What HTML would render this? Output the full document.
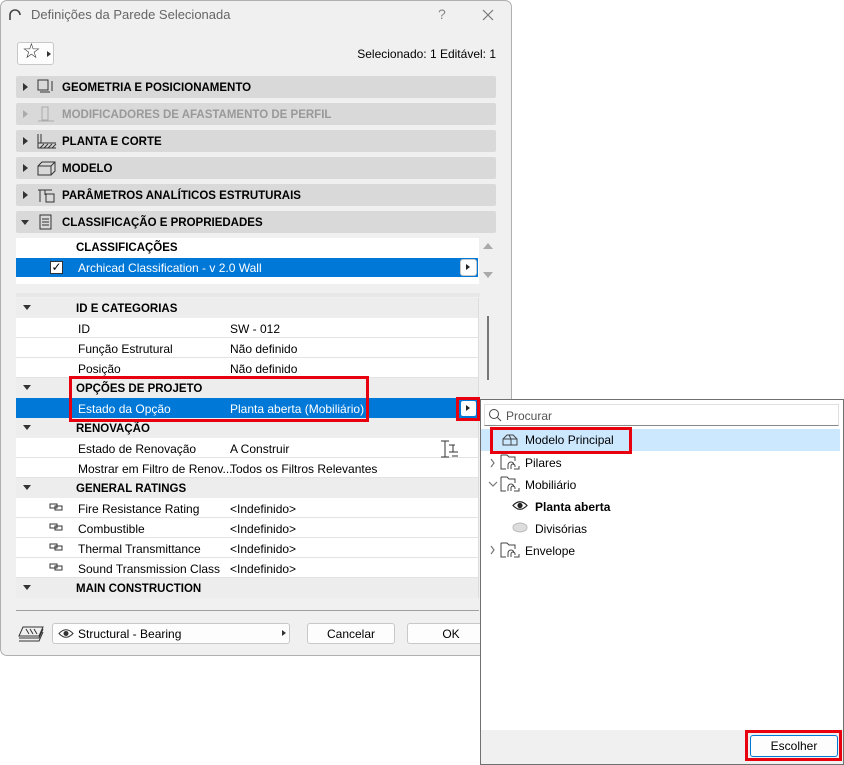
<!DOCTYPE html>
<html><head><meta charset="utf-8"><style>
*{box-sizing:border-box;margin:0;padding:0}
body{width:844px;height:765px;background:#fff;font-family:"Segoe UI","Liberation Sans",sans-serif;font-size:12px;color:#000;position:relative;overflow:hidden}
.a{position:absolute}
.dlg{left:0;top:0;width:512px;height:656px;background:#f0f0f0;border:1px solid #b0b0b0;border-radius:7px}
.sec{left:16px;width:480px;height:22px;background:#d9d9d9;border-radius:2px;font-weight:bold;font-size:11.5px;line-height:24px}
.sec .t{position:absolute;left:46px}
.tri{position:absolute;left:7px;top:7px;width:0;height:0;border-top:4px solid transparent;border-bottom:4px solid transparent;border-left:5px solid #333}
.trid{position:absolute;left:5px;top:9px;width:0;height:0;border-left:4px solid transparent;border-right:4px solid transparent;border-top:5px solid #333}
.ic{position:absolute;left:21px;top:3px}
.row{left:16px;width:462px;height:20px;background:#fff;border-bottom:1px solid #e3e3e3;line-height:22px}
.hdr{left:16px;width:462px;height:20px;background:#ededed;line-height:22px;font-weight:bold;font-size:11.5px}
.hdr .trid{left:7px;top:7px}
.row .l{position:absolute;left:62px}.row .v{position:absolute;left:214px}
.hdr .l{position:absolute;left:60px}
.sel{background:#0078d7;color:#fff}
.btn{background:#fdfdfd;border:1px solid #c8c8c8;border-radius:3px;text-align:center;line-height:20px}
.red{border:3px solid #e8000f}
</style></head><body>
<div class="a dlg"></div>
<svg class="a" style="left:8px;top:9px" width="14" height="12"><path d="M2 11 V6 A5 5 0 0 1 12 6" fill="none" stroke="#444" stroke-width="1.6"/></svg>
<div class="a" style="left:31px;top:7px;font-size:13px;color:#666">Definições da Parede Selecionada</div>
<div class="a" style="left:438px;top:6px;font-size:14px;color:#888">?</div>
<svg class="a" style="left:482px;top:9px" width="12" height="12"><path d="M1 1L11 11M11 1L1 11" stroke="#777" stroke-width="1.2"/></svg>
<div class="a btn" style="left:17px;top:42px;width:37px;height:23px"></div>
<div class="a" style="left:22px;top:41px;font-size:21px;line-height:22px;color:#333">☆</div>
<div class="a" style="left:47px;top:51px;border-top:3px solid transparent;border-bottom:3px solid transparent;border-left:4px solid #333"></div>
<div class="a" style="right:348px;top:47px">Selecionado: 1 Editável: 1</div>

<div class="a sec" style="top:76px"><i class="tri"></i><svg class="ic" width="18" height="16"><rect x="1" y="1" width="10" height="10" fill="none" stroke="#333"/><path d="M3 13h10M15 2v10" stroke="#333"/></svg><span class="t">GEOMETRIA E POSICIONAMENTO</span></div>
<div class="a sec" style="top:103px;color:#999"><i class="tri" style="border-left-color:#aaa"></i><svg class="ic" width="18" height="16"><rect x="5" y="1" width="6" height="13" fill="none" stroke="#aaa"/><path d="M1 15h16" stroke="#aaa"/></svg><span class="t">MODIFICADORES DE AFASTAMENTO DE PERFIL</span></div>
<div class="a sec" style="top:130px"><i class="tri"></i><svg class="ic" width="20" height="16"><path d="M1 1v14h18M1 10h18M4 1v9" fill="none" stroke="#333"/><path d="M3 15l4-4M7 15l4-4M11 15l4-4M15 15l4-4" stroke="#333"/></svg><span class="t">PLANTA E CORTE</span></div>
<div class="a sec" style="top:157px"><i class="tri"></i><svg class="ic" width="20" height="16"><path d="M1 6h13v9H1zM1 6l4-4h13v9l-4 4M14 6l4-4" fill="none" stroke="#333"/></svg><span class="t">MODELO</span></div>
<div class="a sec" style="top:184px"><i class="tri"></i><svg class="ic" width="20" height="16"><path d="M1 3h14M3 3v12M8 3v5" fill="none" stroke="#333"/><rect x="9" y="7" width="8" height="8" fill="none" stroke="#333"/></svg><span class="t">PARÂMETROS ANALÍTICOS ESTRUTURAIS</span></div>
<div class="a sec" style="top:211px"><i class="trid" style="left:5px"></i><svg class="ic" width="18" height="16"><rect x="3" y="1" width="11" height="14" fill="none" stroke="#333"/><path d="M5 5h7M5 8h7M5 11h7" stroke="#333"/></svg><span class="t">CLASSIFICAÇÃO E PROPRIEDADES</span></div>

<div class="a" style="left:16px;top:238px;width:463px;height:46px;background:#fff"></div>
<div class="a" style="left:76px;top:242px;font-weight:bold;font-size:11.5px">CLASSIFICAÇÕES</div>
<div class="a sel" style="left:16px;top:258px;width:462px;height:19px;line-height:20px"><span style="position:absolute;left:62px">Archicad Classification - v 2.0 Wall</span></div>
<div class="a" style="left:50px;top:261px;width:13px;height:13px;background:#fff;border:1px solid #333;color:#000;font-size:12px;line-height:11px;text-align:center">✓</div>
<div class="a btn" style="left:460px;top:259px;width:17px;height:17px"></div>
<div class="a" style="left:466px;top:264px;border-top:3.5px solid transparent;border-bottom:3.5px solid transparent;border-left:4px solid #222"></div>
<div class="a" style="left:483px;top:243px;border-left:5px solid transparent;border-right:5px solid transparent;border-bottom:6px solid #aaa"></div>
<div class="a" style="left:483px;top:272px;border-left:5px solid transparent;border-right:5px solid transparent;border-top:6px solid #aaa"></div>
<div class="a" style="left:16px;top:293px;width:464px;height:4px;background:#e8e8e8"></div>

<div class="a hdr" style="top:298px"><i class="trid"></i><span class="l">ID E CATEGORIAS</span></div>
<div class="a row" style="top:318px"><span class="l">ID</span><span class="v">SW - 012</span></div>
<div class="a row" style="top:338px"><span class="l">Função Estrutural</span><span class="v">Não definido</span></div>
<div class="a row" style="top:358px"><span class="l">Posição</span><span class="v">Não definido</span></div>
<div class="a hdr" style="top:378px"><i class="trid"></i><span class="l">OPÇÕES DE PROJETO</span></div>
<div class="a row sel" style="top:398px;border:none"><span class="l">Estado da Opção</span><span class="v">Planta aberta (Mobiliário)</span></div>
<div class="a hdr" style="top:418px"><i class="trid"></i><span class="l">RENOVAÇÃO</span></div>
<div class="a row" style="top:438px"><span class="l">Estado de Renovação</span><span class="v">A Construir</span></div>
<div class="a row" style="top:458px"><span class="l">Mostrar em Filtro de Renov...</span><span class="v">Todos os Filtros Relevantes</span></div>
<div class="a hdr" style="top:478px"><i class="trid"></i><span class="l">GENERAL RATINGS</span></div>
<div class="a row" style="top:498px"><span class="l">Fire Resistance Rating</span><span class="v">&lt;Indefinido&gt;</span></div>
<div class="a row" style="top:518px"><span class="l">Combustible</span><span class="v">&lt;Indefinido&gt;</span></div>
<div class="a row" style="top:538px"><span class="l">Thermal Transmittance</span><span class="v">&lt;Indefinido&gt;</span></div>
<div class="a row" style="top:558px"><span class="l">Sound Transmission Class</span><span class="v">&lt;Indefinido&gt;</span></div>
<div class="a hdr" style="top:578px"><i class="trid"></i><span class="l">MAIN CONSTRUCTION</span></div>
<div class="a" style="left:478px;top:298px;width:1px;height:300px;background:#ddd"></div>
<div class="a" style="left:487px;top:316px;width:2px;height:64px;background:#777"></div>
<svg class="a" style="left:49px;top:502px" width="16" height="70"><g fill="none" stroke="#333"><path d="M1 2h7v4H1zM6 4h7v4H6z"/><path d="M1 22h7v4H1zM6 24h7v4H6z"/><path d="M1 42h7v4H1zM6 44h7v4H6z"/><path d="M1 62h7v4H1zM6 64h7v4H6z"/></g></svg>
<svg class="a" style="left:440px;top:440px" width="20" height="18"><path d="M1 1h8M5 1v16M1 17h8M9 5h6M13 5v7M9 12h9M12 16h6" fill="none" stroke="#333"/></svg>

<div class="a red" style="left:69px;top:376px;width:300px;height:46px"></div>
<div class="a btn" style="left:460px;top:400px;width:17px;height:17px;border-color:#0078d7"></div>
<div class="a" style="left:466px;top:405px;border-top:3.5px solid transparent;border-bottom:3.5px solid transparent;border-left:4px solid #222"></div>
<div class="a red" style="left:456px;top:397px;width:24px;height:24px"></div>

<div class="a" style="left:16px;top:610px;width:463px;height:1px;background:#a0a0a0"></div>
<svg class="a" style="left:18px;top:626px" width="26" height="16"><path d="M5 1h20l-4 9H1zM1 12h20l4-9M1 15h20l4-9" fill="none" stroke="#333"/><path d="M8 3l3 5M12 3l3 5M16 3l3 5" stroke="#333"/></svg>
<div class="a btn" style="left:52px;top:623px;width:238px;height:21px;text-align:left"></div>
<svg class="a" style="left:58px;top:628px" width="16" height="11"><path d="M1 5.5Q8 -2 15 5.5Q8 13 1 5.5z" fill="none" stroke="#333"/><circle cx="8" cy="5.5" r="2.5" fill="#333"/></svg>
<div class="a" style="left:78px;top:627px">Structural - Bearing</div>
<div class="a" style="left:282px;top:630px;border-top:3.5px solid transparent;border-bottom:3.5px solid transparent;border-left:4px solid #333"></div>
<div class="a btn" style="left:307px;top:623px;width:88px;height:21px">Cancelar</div>
<div class="a btn" style="left:407px;top:623px;width:88px;height:21px">OK</div>

<div class="a" style="left:480px;top:399px;width:364px;height:366px;background:#fff;border:1px solid #707070"></div>
<div class="a" style="left:484px;top:404px;width:355px;height:22px;border:1px solid #e0e0e0;border-bottom-color:#888"></div>
<svg class="a" style="left:488px;top:408px" width="14" height="14"><circle cx="6" cy="6" r="4.5" fill="none" stroke="#444"/><path d="M9.5 9.5L13 13" stroke="#444"/></svg>
<div class="a" style="left:506px;top:409px;color:#555">Procurar</div>
<div class="a" style="left:481px;top:429px;width:359px;height:22px;background:#cce8ff"></div>
<div class="a red" style="left:490px;top:427px;width:142px;height:27px"></div>
<svg class="a" style="left:502px;top:433px" width="17" height="13"><path d="M1 12V6L5 2h6l4 4v6zM1 6h14M9 6l-2-4" fill="none" stroke="#444"/><path d="M9 6v6" stroke="#444"/></svg>
<div class="a" style="left:525px;top:433px">Modelo Principal</div>
<svg class="a" style="left:488px;top:453px" width="20" height="110"><g fill="none" stroke="#777" stroke-width="1.2"><path d="M3 6l3 4-3 4"/><path d="M1 29l4 4 4-4"/><path d="M3 93l3 4-3 4"/></g></svg>
<svg class="a" style="left:500px;top:453px" width="22" height="110"><g fill="none" stroke="#444"><path d="M1 2h6l2 2h6v4M1 2v14h5"/><path d="M8 16v-4a3 3 0 0 1 6 0M11 16v-3a2 2 0 0 1 4 0v1M14 16h5v-3"/><g transform="translate(0,22)"><path d="M1 2h6l2 2h6v4M1 2v14h5"/><path d="M8 16v-4a3 3 0 0 1 6 0M11 16v-3a2 2 0 0 1 4 0v1M14 16h5v-3"/></g><g transform="translate(0,88)"><path d="M1 2h6l2 2h6v4M1 2v14h5"/><path d="M8 16v-4a3 3 0 0 1 6 0M11 16v-3a2 2 0 0 1 4 0v1M14 16h5v-3"/></g></g></svg>
<div class="a" style="left:525px;top:456px">Pilares</div>
<div class="a" style="left:525px;top:478px">Mobiliário</div>
<svg class="a" style="left:512px;top:500px" width="16" height="11"><path d="M1 5.5Q8 -2 15 5.5Q8 13 1 5.5z" fill="none" stroke="#222" stroke-width="1.2"/><circle cx="8" cy="5.5" r="2.6" fill="#222"/></svg>
<div class="a" style="left:535px;top:500px;font-weight:bold">Planta aberta</div>
<svg class="a" style="left:512px;top:522px" width="16" height="11"><ellipse cx="8" cy="5.5" rx="7" ry="4.5" fill="#ddd" stroke="#bbb"/></svg>
<div class="a" style="left:535px;top:522px">Divisórias</div>
<div class="a" style="left:525px;top:544px">Envelope</div>
<div class="a" style="left:481px;top:730px;width:362px;height:34px;background:#f0f0f0"></div>
<div class="a btn" style="left:750px;top:735px;width:88px;height:22px;border-color:#0078d7;line-height:21px">Escolher</div>
<div class="a red" style="left:745px;top:730px;width:97px;height:31px"></div>
</body></html>
